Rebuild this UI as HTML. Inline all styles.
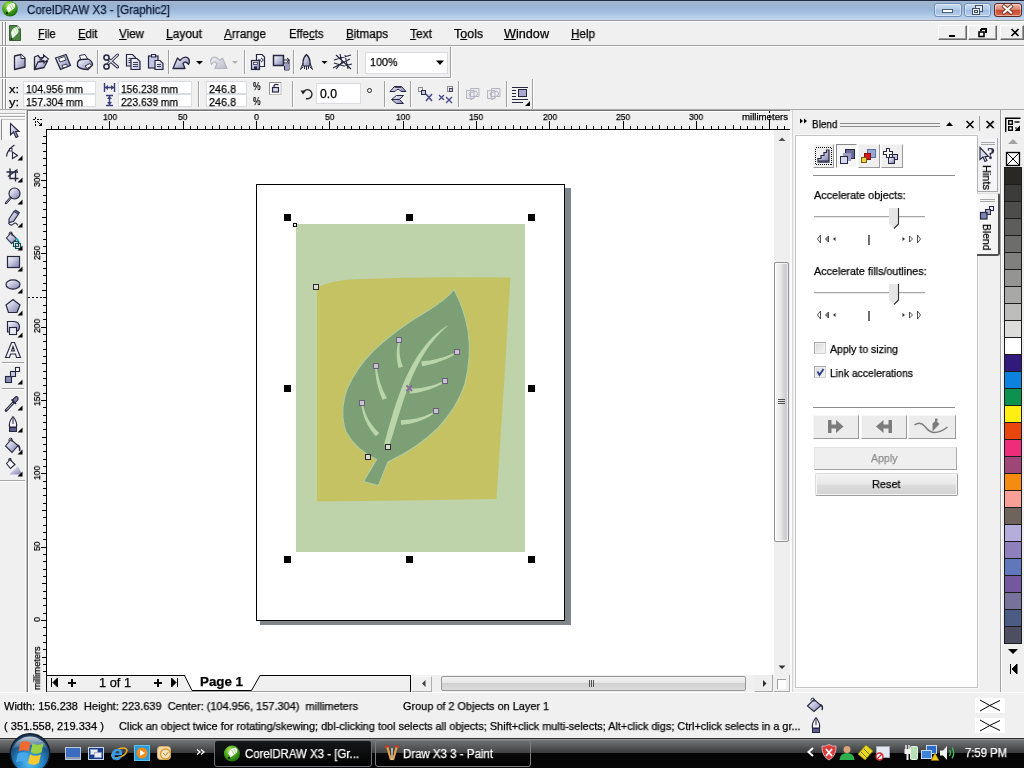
<!DOCTYPE html><html><head><meta charset="utf-8"><title>CorelDRAW X3 - [Graphic2]</title><style>
html,body{margin:0;padding:0;}
body{width:1024px;height:768px;overflow:hidden;background:#f0f0f0;font-family:"Liberation Sans",sans-serif;position:relative;}
.t{position:absolute;white-space:nowrap;transform-origin:0 50%;will-change:transform;-webkit-text-stroke:0.25px;}
.t u{text-decoration:underline;text-underline-offset:1px;}
div{box-sizing:border-box;}
svg{position:absolute;left:0;top:0;overflow:visible;}
.vsep{position:absolute;width:2px;border-left:1px solid #a0a0a0;border-right:1px solid #fff;}
.inp{position:absolute;background:#fff;border:1px solid #d9dde1;}
</style></head><body>
<div style="position:absolute;left:0px;top:0px;width:1024px;height:22px;background:linear-gradient(#1c2c48 0px,#1c2c48 1px,#a9b9cf 1px,#a9b9cf 2px,#9fb3cd 2px,#9ab6d7 9px,#b1cbe9 16px,#c6d6e9 20px,#9a9ca4 20px,#9a9ca4 21px,#fff 21px,#fff 22px);"></div>
<svg width="1024" height="21" viewBox="0 0 1024 21"><defs><radialGradient id="orb" cx="40%" cy="30%" r="70%"><stop offset="0" stop-color="#b8e86a"/><stop offset="0.5" stop-color="#4fae1e"/><stop offset="1" stop-color="#1f6a0c"/></radialGradient></defs><circle cx="10" cy="8.700" r="7.800" fill="url(#orb)"/><path d="M13.500 2.800 Q16.500 5 14.500 8 L8.500 12.500 L6.500 8.500 Q8 3.500 13.500 2.800 Z" fill="#fff" opacity=".95"/><path d="M9.500 5 L12 9.500 M11.500 3.800 L13.800 8" stroke="#8cd060" stroke-width=".8"/><circle cx="7" cy="13" r="1.100" fill="#0c200c"/></svg>
<span class="t" style="left:27px;top:3.84px;font-size:12px;line-height:12px;color:#0c1a33;transform:scaleX(0.9602);">CorelDRAW X3 - [Graphic2]</span>
<div style="position:absolute;left:934px;top:3px;width:28px;height:14px;background:linear-gradient(#c7daf0 0%,#b3cbe8 45%,#9dbbe0 50%,#b8d0ec 100%);border:1px solid #6f8fb8;border-radius:3px;box-shadow:inset 0 0 0 1px rgba(255,255,255,.45);"></div>
<div style="position:absolute;left:964px;top:3px;width:27px;height:14px;background:linear-gradient(#c7daf0 0%,#b3cbe8 45%,#9dbbe0 50%,#b8d0ec 100%);border:1px solid #6f8fb8;border-radius:3px;box-shadow:inset 0 0 0 1px rgba(255,255,255,.45);"></div>
<div style="position:absolute;left:994px;top:3px;width:28px;height:14px;background:linear-gradient(#edb8aa 0%,#dd8a76 45%,#c8482e 50%,#d66a4e 100%);border:1px solid #5a2a28;border-radius:3px;box-shadow:inset 0 0 0 1px rgba(255,255,255,.45);"></div>
<svg width="1024" height="21" viewBox="0 0 1024 21"><rect x="942.5" y="9.5" width="10" height="3" fill="#fff" stroke="#4b5b74"/><rect x="975.5" y="5.5" width="7" height="6" fill="#dfe9f5" stroke="#3f4d63"/><rect x="972.5" y="8.5" width="7" height="6" fill="#eef3fa" stroke="#3f4d63"/><rect x="974.5" y="10.5" width="3" height="2" fill="none" stroke="#3f4d63"/><path d="M1004 6.500 L1011 12.500 M1011 6.500 L1004 12.500" stroke="#7a3424" stroke-width="3.800" stroke-linecap="square"/><path d="M1004 6.500 L1011 12.500 M1011 6.500 L1004 12.500" stroke="#fff" stroke-width="2.200" stroke-linecap="square"/></svg>
<div style="position:absolute;left:0px;top:22px;width:1024px;height:24px;background:#f0f0f0;border-bottom:1px solid #a0a0a0;"></div>
<div style="position:absolute;left:0px;top:46px;width:1024px;height:1px;background:#fff;"></div>
<div style="position:absolute;left:2px;top:22px;width:2px;height:23px;border-left:1px solid #8e8e8e;border-right:1px solid #fff;"></div><div style="position:absolute;left:5px;top:22px;width:2px;height:23px;border-left:1px solid #8e8e8e;border-right:1px solid #fff;"></div>
<svg width="40" height="46" viewBox="0 0 40 46"><path d="M9.500 25.500 H17 L20.500 29 V40.500 H9.500 Z" fill="#4c8444" stroke="#3a5c3a"/><path d="M17 25.500 V29 H20.500" fill="#dfe8dc" stroke="#3a5c3a" stroke-width=".8"/><path d="M16.500 27 Q19.500 30 18 33 L12.500 38.500 L11 33 Q12 28 16.500 27 Z" fill="#f4fff0"/><path d="M13.500 29.500 L15.500 34 M15.500 28 L17.500 32.500" stroke="#a4d890" stroke-width=".8"/><circle cx="11.500" cy="39" r="1" fill="#102810"/></svg>
<span class="t" style="left:37.5px;top:27.92px;font-size:12.5px;line-height:12.5px;color:#000;transform:scaleX(0.8689);"><u>F</u>ile</span>
<span class="t" style="left:77.5px;top:27.92px;font-size:12.5px;line-height:12.5px;color:#000;transform:scaleX(0.9053);"><u>E</u>dit</span>
<span class="t" style="left:119px;top:27.92px;font-size:12.5px;line-height:12.5px;color:#000;transform:scaleX(0.9305);"><u>V</u>iew</span>
<span class="t" style="left:166px;top:27.92px;font-size:12.5px;line-height:12.5px;color:#000;transform:scaleX(0.9593);"><u>L</u>ayout</span>
<span class="t" style="left:224px;top:27.92px;font-size:12.5px;line-height:12.5px;color:#000;transform:scaleX(0.9445);"><u>A</u>rrange</span>
<span class="t" style="left:288.5px;top:27.92px;font-size:12.5px;line-height:12.5px;color:#000;transform:scaleX(0.9084);">Effe<u>c</u>ts</span>
<span class="t" style="left:346px;top:27.92px;font-size:12.5px;line-height:12.5px;color:#000;transform:scaleX(0.9302);"><u>B</u>itmaps</span>
<span class="t" style="left:410px;top:27.92px;font-size:12.5px;line-height:12.5px;color:#000;transform:scaleX(0.9597);"><u>T</u>ext</span>
<span class="t" style="left:454px;top:27.92px;font-size:12.5px;line-height:12.5px;color:#000;transform:scaleX(0.9938);">T<u>o</u>ols</span>
<span class="t" style="left:504px;top:27.92px;font-size:12.5px;line-height:12.5px;color:#000;transform:scaleX(1.0122);"><u>W</u>indow</span>
<span class="t" style="left:571px;top:27.92px;font-size:12.5px;line-height:12.5px;color:#000;transform:scaleX(0.9336);"><u>H</u>elp</span>
<div style="position:absolute;left:938px;top:25px;width:29px;height:15px;background:#f0f0f0;border-top:1px solid #fff;border-left:1px solid #fff;border-right:1px solid #696969;border-bottom:1px solid #696969;box-shadow:inset -1px -1px 0 #a0a0a0;"></div>
<div style="position:absolute;left:968px;top:25px;width:29px;height:15px;background:#f0f0f0;border-top:1px solid #fff;border-left:1px solid #fff;border-right:1px solid #696969;border-bottom:1px solid #696969;box-shadow:inset -1px -1px 0 #a0a0a0;"></div>
<div style="position:absolute;left:1000px;top:25px;width:24px;height:15px;background:#f0f0f0;border-top:1px solid #fff;border-left:1px solid #fff;border-right:1px solid #696969;border-bottom:1px solid #696969;box-shadow:inset -1px -1px 0 #a0a0a0;"></div>
<svg width="1024" height="46" viewBox="0 0 1024 46"><rect x="949" y="35" width="6" height="2" fill="#000"/><path d="M981 29 H986 V33 M981 29 V31" stroke="#000" stroke-width="2" fill="none"/><rect x="979" y="32" width="5" height="4.5" fill="#fff" stroke="#000" stroke-width="1.6"/><path d="M1011.5 29 L1018.5 36 M1018.5 29 L1011.5 36" stroke="#000" stroke-width="1.7"/></svg>
<div style="position:absolute;left:0px;top:47px;width:451px;height:31px;border-bottom:1px solid #a0a0a0;border-right:1px solid #a0a0a0;"></div>
<div style="position:absolute;left:0px;top:78px;width:452px;height:1px;background:#fff;"></div>
<div style="position:absolute;left:451px;top:47px;width:1px;height:31px;background:#fff;"></div>
<div style="position:absolute;left:2px;top:47px;width:2px;height:30px;border-left:1px solid #8e8e8e;border-right:1px solid #fff;"></div><div style="position:absolute;left:5px;top:47px;width:2px;height:30px;border-left:1px solid #8e8e8e;border-right:1px solid #fff;"></div>
<div class="vsep" style="left:97px;top:50px;height:24px"></div>
<div class="vsep" style="left:168px;top:50px;height:24px"></div>
<div class="vsep" style="left:244px;top:50px;height:24px"></div>
<div class="vsep" style="left:293px;top:50px;height:24px"></div>
<div class="vsep" style="left:357px;top:50px;height:24px"></div>
<svg width="1024" height="768" viewBox="0 0 1024 768"><defs><linearGradient id="lg" x1="0" y1="0" x2="1" y2="1"><stop offset="0" stop-color="#fbfbfe"/><stop offset="0.35" stop-color="#d4d4e8"/><stop offset="1" stop-color="#7c7cac"/></linearGradient><linearGradient id="lgd" x1="0" y1="0" x2="1" y2="1"><stop offset="0" stop-color="#f2f2f6"/><stop offset="1" stop-color="#b9b9c6"/></linearGradient></defs><path d="M14.500 56 L21 54.500 L25 58 V67 L14.500 69.500 Z" fill="url(#lg)" stroke="#26263e" stroke-width="1.3" stroke-linejoin="round"/><path d="M21 54.500 V58.500 H25" fill="#fff" stroke="#26263e" stroke-width="1"/><path d="M34.500 57 L38 55.500 L40 58 L44.500 57.500 L42.500 63 L34.500 69.500 Z" fill="url(#lg)" stroke="#26263e" stroke-width="1.3" stroke-linejoin="round"/><path d="M34.500 69.500 L38 62 L47.500 61 L44 67.500 Z" fill="url(#lg)" stroke="#26263e" stroke-width="1.3" stroke-linejoin="round"/><path d="M40 60 L43.500 57.500 V55 L48.500 59 L44 63 V60.500 Z" fill="#f0f0f8" stroke="#26263e" stroke-width="1.100"/><path d="M55.500 58 L66 54.500 L70.500 65.500 L60.500 69.500 Z" fill="url(#lg)" stroke="#26263e" stroke-width="1.3" stroke-linejoin="round"/><path d="M58.500 58.500 L64.500 56.500 L66 60 L60 62 Z" fill="#fff" stroke="#26263e" stroke-width=".9"/><path d="M62 65.500 L66.500 64 L67.500 66.500 L63 68 Z" fill="#fff" stroke="#26263e" stroke-width=".9"/><path d="M81 61 L79.500 55.500 L85 54.500 L88 59.500" fill="#fff" stroke="#26263e" stroke-width="1"/><path d="M77.500 63 Q78 59.500 82 59.500 L88 59 Q92.500 61 92.500 65 L88 69.500 Q80 69.500 77.500 66 Z" fill="url(#lg)" stroke="#26263e" stroke-width="1.3"/><path d="M85 66 L90 63.500 L91.500 66 L87 68.500 Z" fill="#fff" stroke="#26263e" stroke-width=".9"/><path d="M117.500 55 L108 64 M106 57 L117.500 67" stroke="#26263e" stroke-width="3" stroke-linecap="round"/><path d="M117.500 55 L108 64 M106 57 L117.500 67" stroke="#e4e4f2" stroke-width="1.100" stroke-linecap="round"/><circle cx="106.500" cy="57.500" r="2.600" fill="#e8e8f4" stroke="#26263e" stroke-width="1.500"/><circle cx="106.500" cy="66.500" r="2.600" fill="#e8e8f4" stroke="#26263e" stroke-width="1.500"/><defs><linearGradient id="lgp" x1="0" y1="0" x2="1" y2="1"><stop offset="0" stop-color="#ffffff"/><stop offset="1" stop-color="#b8b8dc"/></linearGradient></defs><path d="M126.5 54.5 H132.5 L135.5 57.5 V66.0 H126.5 Z" fill="url(#lgp)" stroke="#26263e" stroke-width="1.200"/><path d="M128.5 58.5 H133.5" stroke="#3c3c5c" stroke-width="1"/><path d="M128.5 60.5 H133.5" stroke="#3c3c5c" stroke-width="1"/><path d="M128.5 62.5 H133.5" stroke="#3c3c5c" stroke-width="1"/><path d="M131 58.5 H137 L140 61.5 V69.5 H131 Z" fill="url(#lgp)" stroke="#26263e" stroke-width="1.200"/><path d="M133 62.5 H138" stroke="#3c3c5c" stroke-width="1"/><path d="M133 64.5 H138" stroke="#3c3c5c" stroke-width="1"/><path d="M133 66.5 H138" stroke="#3c3c5c" stroke-width="1"/><rect x="148.500" y="56" width="9.500" height="12" fill="#c4c4e4" stroke="#26263e" stroke-width="1.200"/><rect x="151.500" y="54.500" width="4" height="2.500" fill="#e4e4f4" stroke="#26263e"/><path d="M155 60.5 H160 L163 63.5 V69.5 H155 Z" fill="url(#lgp)" stroke="#26263e" stroke-width="1.200"/><path d="M157 64.5 H161" stroke="#3c3c5c" stroke-width="1"/><path d="M157 66.5 H161" stroke="#3c3c5c" stroke-width="1"/><path d="M173 68.500 L177.500 58 L180 60.500 Q184 55.500 188 58 Q190.500 60.500 188.500 64.500 Q186 60.500 183 63.500 L185 68.500 Z" fill="url(#lg)" stroke="#26263e" stroke-width="1.3" stroke-linejoin="round"/><path d="M196 61 H203 L199.500 64.500 Z" fill="#000"/><path d="M227 68.500 L222.500 58 L220 60.500 Q216 55.500 212 58 Q209.500 60.500 211.500 64.500 Q214 60.500 217 63.500 L215 68.500 Z" fill="url(#lgd)" stroke="#b4b4c0" stroke-width="1.200" stroke-linejoin="round"/><path d="M232 61 H238 L235 64 Z" fill="#b0b0b0"/><path d="M256.500 54.500 H262 L264.500 57 V66.500 H256.500 Z" fill="#f4f4fa" stroke="#26263e" stroke-width="1.200"/><path d="M258 60 H261 M261 58 L263.500 60 L261 62" stroke="#26263e" fill="none"/><rect x="251.500" y="60.500" width="8" height="9" fill="url(#lg)" stroke="#26263e" stroke-width="1.200"/><rect x="253.500" y="62.500" width="4" height="2" fill="#fff" stroke="#26263e" stroke-width=".7"/><rect x="254" y="66.500" width="3" height="3" fill="#26263e"/><rect x="273.500" y="55.500" width="10" height="10" fill="url(#lg)" stroke="#26263e" stroke-width="1.500"/><path d="M284 60 H289 M287 58 L289.500 60 L287 62 M284 63 H289 M289 60 V70 M284.500 66 V70 H289" stroke="#26263e" fill="none"/><path d="M285 64 H289 V69.500 H285 Z" fill="#9c9cc0"/><path d="M306.500 54.500 Q310 58 310 62 V66 H303 V62 Q303 58 306.500 54.500 Z" fill="url(#lg)" stroke="#26263e" stroke-width="1.200"/><path d="M303 63 L300.500 69.500 L303 67 M310 63 L312.500 69.500 L310 67 M304.500 66 V69 M306.500 66 V70 M308.500 66 V69" stroke="#26263e" fill="none"/><path d="M321.500 61 H327.500 L324.500 64 Z" fill="#000"/><path d="M334 60 L351 55 M336 55 L351 69 M333 68 L350 59 M340 54 L342 62 L336 69 M345 55 L348 69 M334 63 L344 66 L352 64" stroke="#26263e" stroke-width="1.100" fill="none"/></svg>
<div style="position:absolute;left:365px;top:52px;width:83px;height:22px;background:#fff;border:1px solid #d9dde1;"></div>
<span class="t" style="left:370px;top:56.77px;font-size:11.5px;line-height:11.5px;color:#000;transform:scaleX(0.9350);">100%</span>
<svg width="1024" height="100" viewBox="0 0 1024 100"><path d="M436 60.500 H444 L440 65 Z" fill="#000"/></svg>
<div style="position:absolute;left:0px;top:79px;width:533px;height:30px;border-right:1px solid #a0a0a0;"></div>
<div style="position:absolute;left:533px;top:79px;width:1px;height:30px;background:#fff;"></div>
<div style="position:absolute;left:0px;top:109px;width:1024px;height:1px;background:#a8a8a8;"></div>
<div style="position:absolute;left:2px;top:79px;width:2px;height:30px;border-left:1px solid #8e8e8e;border-right:1px solid #fff;"></div><div style="position:absolute;left:5px;top:79px;width:2px;height:30px;border-left:1px solid #8e8e8e;border-right:1px solid #fff;"></div>
<span class="t" style="left:9px;top:84.19px;font-size:11px;line-height:11px;color:#000;transform:scaleX(1.1688);">x:</span>
<span class="t" style="left:9px;top:96.69px;font-size:11px;line-height:11px;color:#000;transform:scaleX(1.1688);">y:</span>
<div class="inp" style="left:23px;top:81px;width:73px;height:13px"></div><div class="inp" style="left:23px;top:94px;width:73px;height:13px"></div>
<span class="t" style="left:26px;top:84.19px;font-size:11px;line-height:11px;color:#000;transform:scaleX(0.9323);">104.956 mm</span>
<span class="t" style="left:26px;top:96.69px;font-size:11px;line-height:11px;color:#000;transform:scaleX(0.9323);">157.304 mm</span>
<div class="inp" style="left:118px;top:81px;width:74px;height:13px"></div><div class="inp" style="left:118px;top:94px;width:74px;height:13px"></div>
<span class="t" style="left:121px;top:84.19px;font-size:11px;line-height:11px;color:#000;transform:scaleX(0.9323);">156.238 mm</span>
<span class="t" style="left:121px;top:96.69px;font-size:11px;line-height:11px;color:#000;transform:scaleX(0.9323);">223.639 mm</span>
<div class="inp" style="left:206px;top:81px;width:41px;height:13px"></div><div class="inp" style="left:206px;top:94px;width:41px;height:13px"></div>
<span class="t" style="left:209px;top:84.19px;font-size:11px;line-height:11px;color:#000;transform:scaleX(0.9810);">246.8</span>
<span class="t" style="left:209px;top:96.69px;font-size:11px;line-height:11px;color:#000;transform:scaleX(0.9810);">246.8</span>
<span class="t" style="left:253px;top:81.39px;font-size:11px;line-height:11px;color:#000;transform:scaleX(0.7668);">%</span>
<span class="t" style="left:253px;top:95.69px;font-size:11px;line-height:11px;color:#000;transform:scaleX(0.7668);">%</span>
<div class="vsep" style="left:198px;top:81px;height:26px"></div>
<div class="vsep" style="left:292px;top:81px;height:26px"></div>
<div class="vsep" style="left:384px;top:81px;height:26px"></div>
<div class="vsep" style="left:410px;top:81px;height:26px"></div>
<div class="vsep" style="left:458px;top:81px;height:26px"></div>
<div class="vsep" style="left:506px;top:81px;height:26px"></div>
<div class="inp" style="left:316px;top:83px;width:45px;height:21px"></div>
<span class="t" style="left:320px;top:88.34px;font-size:12px;line-height:12px;color:#000;transform:scaleX(1.0192);">0.0</span>
<svg width="1024" height="768" viewBox="0 0 1024 768"><path d="M104.500 83 V92 M114.500 83 V92 M105 87.500 H114" stroke="#3c3c78" stroke-width="1.400"/><path d="M105 87.500 L108 85 V90 Z M114 87.500 L111 85 V90 Z" fill="#3c3c78"/><path d="M106 95.500 H113 M106 105.500 H113 M109.500 96 V105" stroke="#3c3c78" stroke-width="1.400"/><path d="M109.500 96 L107 99 H112 Z M109.500 105 L107 102 H112 Z" fill="#3c3c78"/><rect x="269.500" y="82.500" width="11.500" height="12" fill="#fff" stroke="#c0c0c0"/><path d="M269.500 94.500 V82.500 H281" fill="none" stroke="#909090"/><rect x="272.500" y="87.500" width="6" height="4.500" fill="#d8d8ec" stroke="#26263e" stroke-width="1.200"/><path d="M274 87 V85.500 Q276 83.500 278.500 85" stroke="#26263e" fill="none" stroke-width="1.200"/><path d="M303.500 92 A4.500 4.500 0 1 1 306 98.500" fill="none" stroke="#222" stroke-width="1.400"/><path d="M300.500 90.500 H306 L303 94.500 Z" fill="#222"/><circle cx="369.500" cy="90.500" r="2" fill="none" stroke="#222" stroke-width="1"/><path d="M390 91.500 L394.500 86.500 H401.500 L406 91.500 H401 L399 89.500 H397 L395 91.500 Z" fill="url(#lg)" stroke="#26263e" stroke-width="1"/><path d="M394.500 87 H401.500" stroke="#26263e" stroke-width="1.600"/><path d="M403.500 95.500 H396.500 L391.500 99.500 L396.500 103.500 H403.500 L399.500 99.500 Z" fill="url(#lg)" stroke="#26263e" stroke-width="1"/><path d="M392 99.500 H400" stroke="#26263e" stroke-width="1"/><rect x="418.500" y="87.500" width="4" height="4" fill="none" stroke="#26263e" stroke-dasharray="1 1"/><rect x="421.500" y="90.500" width="4" height="4" fill="#c8c8e0" stroke="#26263e"/><path d="M426 94 L432 101 M432 94 L426 101" stroke="#4a4a8c" stroke-width="1.600"/><path d="M439 95 L444 100 M444 95 L439 100 M446 97 L452 103 M452 97 L446 103" stroke="#4a4a8c" stroke-width="1.400"/><rect x="447.500" y="86.500" width="5" height="5" fill="none" stroke="#26263e" stroke-dasharray="1 1"/><rect x="449.500" y="88.500" width="3" height="3" fill="#c8c8e0" stroke="#26263e" stroke-width=".8"/><path d="M466.500 90.500 H474 V98.5 H466.500 Z M470.500 88.500 H479 V96.500 H470.500 Z M469 93 L476 91 L478 94 L471 100 Z" fill="#ebebef" stroke="#b6b6c2"/><path d="M487.500 90.500 H495 V98.5 H487.500 Z M491.500 88.500 H500 V96.500 H491.500 Z M490 93 L497 91 L499 94 L492 100 Z" fill="#ebebef" stroke="#b6b6c2"/><path d="M512 87.500 H528 M512 90.500 H516 M512 93.500 H516 M512 96.500 H516 M512 99.500 H528 M512 102.500 H523" stroke="#26263e" stroke-width="1"/><rect x="518.500" y="89.500" width="8" height="7" fill="#a9a9d0" stroke="#26263e"/><path d="M525 106 H530 V101 Z" fill="#000"/></svg>
<div style="position:absolute;left:0px;top:110px;width:27px;height:582px;background:#f0f0f0;"></div>
<div style="position:absolute;left:0px;top:113px;width:26px;height:1px;background:#b4b4b4;"></div>
<div style="position:absolute;left:0px;top:114px;width:26px;height:1px;background:#fff;"></div>
<div style="position:absolute;left:0px;top:116px;width:26px;height:1px;background:#a8a8a8;"></div>
<div style="position:absolute;left:0px;top:117px;width:26px;height:1px;background:#fff;"></div>
<div style="position:absolute;left:1px;top:119px;width:25px;height:21px;background:#f7f7f7;border-left:1px solid #8a8a8a;border-top:1px solid #c8c8c8;"></div>
<div style="position:absolute;left:2px;top:362px;width:22px;height:2px;border-top:1px solid #a0a0a0;border-bottom:1px solid #fff;"></div>
<div style="position:absolute;left:2px;top:388px;width:22px;height:2px;border-top:1px solid #a0a0a0;border-bottom:1px solid #fff;"></div>
<div style="position:absolute;left:0px;top:480px;width:25px;height:2px;border-top:1px solid #a8a8a8;border-bottom:1px solid #fff;"></div>
<div style="position:absolute;left:25px;top:110px;width:1px;height:582px;background:#fafafa;"></div>
<div style="position:absolute;left:26px;top:110px;width:1px;height:582px;background:#c4c4c4;"></div>
<svg width="30" height="768" viewBox="0 0 30 768"><path d="M10.500 123.500 V135 L13.500 132 L16 137.500 L18 136.500 L15.500 131.500 H19 Z" fill="url(#lg)" stroke="#26263e" stroke-width="1.100"/><path d="M6.500 156.500 Q7 150 14.500 145" fill="none" stroke="#26263e" stroke-width="1.300"/><rect x="9.500" y="148.500" width="2.500" height="2.500" fill="#fff" stroke="#26263e" stroke-width=".9"/><path d="M12.500 152 V158.500 L17.500 155.500 Z" fill="#f4f4fa" stroke="#26263e" stroke-width="1.100"/><path d="M22.500 155.5 V160.5 H17.500 Z" fill="#000"/><path d="M6.500 172 H18 M10 168.500 V178.500 H18.500 M15.500 170 V181.500 M8 176.500 L17.500 169.500" stroke="#26263e" stroke-width="1.400" fill="none"/><path d="M22.500 177.5 V182.5 H17.500 Z" fill="#000"/><circle cx="14.500" cy="193.500" r="5.500" fill="url(#lg)" stroke="#26263e" stroke-width="1.200"/><path d="M10.500 198 L6 203" stroke="#26263e" stroke-width="2.400" stroke-linecap="round"/><path d="M10.500 198 L6 203" stroke="#c8c8dc" stroke-width=".8"/><path d="M22.500 199.5 V204.5 H17.500 Z" fill="#000"/><path d="M9 219 L14 211.500 L18.500 214 L13.500 221.500 L9 222.500 Z" fill="url(#lg)" stroke="#26263e" stroke-width="1.100"/><path d="M14 211.500 L15.500 210 L19.500 212.500 L18.500 214" fill="#5c5c8c" stroke="#26263e"/><path d="M8.500 223 Q11 227 14 223.500 Q16 222 18 225.500" fill="none" stroke="#26263e" stroke-width="1.100"/><path d="M22.500 222.5 V227.5 H17.500 Z" fill="#000"/><path d="M6.500 238 L11 233 L17 239 L11.500 243.500 Z" fill="url(#lg)" stroke="#26263e" stroke-width="1.100"/><path d="M9 234.500 Q9 231 12 232.500 V236" fill="none" stroke="#26263e"/><path d="M16 238.500 Q19 240 18.500 243" stroke="#18b0b8" stroke-width="1.800" fill="none"/><rect x="13.500" y="241.500" width="5" height="5" fill="none" stroke="#0c4c54" stroke-width="1.100"/><rect x="15.500" y="243.500" width="5" height="5" fill="none" stroke="#0c4c54" stroke-width="1.100"/><path d="M22.500 245.5 V250.5 H17.500 Z" fill="#000"/><rect x="7.500" y="256.500" width="12" height="11" fill="url(#lg)" stroke="#26263e" stroke-width="1.200"/><path d="M22.500 266.5 V271.5 H17.500 Z" fill="#000"/><ellipse cx="13" cy="284.500" rx="7" ry="4.700" fill="url(#lg)" stroke="#26263e" stroke-width="1.200"/><path d="M22.500 288.5 V293.5 H17.500 Z" fill="#000"/><path d="M13 299.500 L20 305 L17 312.500 H8.500 L6 305 Z" fill="url(#lg)" stroke="#26263e" stroke-width="1.200"/><path d="M22.500 310.5 V315.5 H17.500 Z" fill="#000"/><path d="M7.500 321.500 H14 Q19.500 322 19.500 327 Q19.500 331 15 332 H7.500 Z" fill="url(#lg)" stroke="#26263e" stroke-width="1.200"/><rect x="9.500" y="327.500" width="7" height="7" fill="#ececf6" stroke="#26263e" stroke-width="1.100"/><path d="M22.500 332.5 V337.5 H17.500 Z" fill="#000"/><path d="M5.500 357.500 L11.500 342.500 H14.500 L20.500 357.500 H16.500 L15.500 354 H10.500 L9.500 357.500 Z M11.500 351 H14.500 L13 346.500 Z" fill="#f2f2fa" stroke="#26263e" stroke-width="1.100" fill-rule="evenodd"/><rect x="5.500" y="376.500" width="6" height="6" fill="#8c8cb8" stroke="#26263e" stroke-width="1.100"/><rect x="10.500" y="371.500" width="5" height="5" fill="#c8c8e0" stroke="#26263e" stroke-width="1.100"/><rect x="15.500" y="367.500" width="4" height="4" fill="#fff" stroke="#26263e" stroke-width="1.100"/><path d="M22.500 379.5 V384.5 H17.500 Z" fill="#000"/><path d="M6 410.500 L13.500 402.500" stroke="#26263e" stroke-width="2.600" stroke-linecap="round"/><path d="M6.500 410 L13 403" stroke="#d4d4e8" stroke-width=".9"/><path d="M12.500 400 L16 396.500 Q18.500 396.500 18 399.500 L15 403 Z" fill="#7c7ca8" stroke="#26263e" stroke-width="1.100"/><path d="M11.500 399.500 L16 404" stroke="#26263e" stroke-width="1.600"/><path d="M22.500 405.5 V410.5 H17.500 Z" fill="#000"/><path d="M13 416.500 Q8.500 422 9.500 427 H16.500 Q17.500 422 13 416.500 Z" fill="#f4f4fa" stroke="#26263e" stroke-width="1.100"/><path d="M13 418 V424" stroke="#26263e"/><rect x="9.500" y="427.500" width="7" height="4" fill="#5c5c8c" stroke="#26263e"/><path d="M22.500 427.5 V432.5 H17.500 Z" fill="#000"/><path d="M5.500 446 L11 439.500 L18 445.500 L12 452.500 Z" fill="url(#lg)" stroke="#26263e" stroke-width="1.100"/><path d="M9 441 Q8.500 437 12 438.500 V442" fill="none" stroke="#26263e"/><path d="M17.500 445 Q20.500 447 19.500 451" stroke="#26263e" stroke-width="1.600" fill="none"/><path d="M22.500 449.5 V454.5 H17.500 Z" fill="#000"/><path d="M6.500 463.500 L10 459.500 L15 464.500 L10.500 468.500 Z" fill="#f4f4fa" stroke="#26263e" stroke-width="1.100"/><path d="M8.500 460.500 Q8.500 457.500 11 458.500 V461" fill="none" stroke="#26263e"/><path d="M9 474.500 L18 466 L22 474.500 Z" fill="url(#lg)"/><path d="M22.500 471.5 V476.5 H17.500 Z" fill="#000"/></svg>
<div style="position:absolute;left:27px;top:110px;width:763px;height:582px;background:#f0f0f0;border-top:1px solid #767676;border-left:1px solid #767676;box-shadow:inset 1px 1px 0 #fff;"></div>
<div style="position:absolute;left:46px;top:129px;width:728px;height:563px;background:#fff;border-top:1px solid #000;border-left:1px solid #000;"></div>
<svg width="1024" height="768" viewBox="0 0 1024 768" shape-rendering="crispEdges"><rect x="51" y="126" width="1" height="3" fill="#000"/><rect x="58" y="126" width="1" height="3" fill="#000"/><rect x="65" y="126" width="1" height="3" fill="#000"/><rect x="73" y="125" width="1" height="4" fill="#000"/><rect x="80" y="126" width="1" height="3" fill="#000"/><rect x="87" y="126" width="1" height="3" fill="#000"/><rect x="95" y="126" width="1" height="3" fill="#000"/><rect x="102" y="126" width="1" height="3" fill="#000"/><rect x="109" y="121" width="1" height="8" fill="#000"/><rect x="117" y="126" width="1" height="3" fill="#000"/><rect x="124" y="126" width="1" height="3" fill="#000"/><rect x="131" y="126" width="1" height="3" fill="#000"/><rect x="139" y="126" width="1" height="3" fill="#000"/><rect x="146" y="125" width="1" height="4" fill="#000"/><rect x="153" y="126" width="1" height="3" fill="#000"/><rect x="161" y="126" width="1" height="3" fill="#000"/><rect x="168" y="126" width="1" height="3" fill="#000"/><rect x="175" y="126" width="1" height="3" fill="#000"/><rect x="183" y="121" width="1" height="8" fill="#000"/><rect x="190" y="126" width="1" height="3" fill="#000"/><rect x="197" y="126" width="1" height="3" fill="#000"/><rect x="205" y="126" width="1" height="3" fill="#000"/><rect x="212" y="126" width="1" height="3" fill="#000"/><rect x="219" y="125" width="1" height="4" fill="#000"/><rect x="227" y="126" width="1" height="3" fill="#000"/><rect x="234" y="126" width="1" height="3" fill="#000"/><rect x="241" y="126" width="1" height="3" fill="#000"/><rect x="249" y="126" width="1" height="3" fill="#000"/><rect x="256" y="121" width="1" height="8" fill="#000"/><rect x="263" y="126" width="1" height="3" fill="#000"/><rect x="271" y="126" width="1" height="3" fill="#000"/><rect x="278" y="126" width="1" height="3" fill="#000"/><rect x="285" y="126" width="1" height="3" fill="#000"/><rect x="293" y="125" width="1" height="4" fill="#000"/><rect x="300" y="126" width="1" height="3" fill="#000"/><rect x="307" y="126" width="1" height="3" fill="#000"/><rect x="315" y="126" width="1" height="3" fill="#000"/><rect x="322" y="126" width="1" height="3" fill="#000"/><rect x="329" y="121" width="1" height="8" fill="#000"/><rect x="337" y="126" width="1" height="3" fill="#000"/><rect x="344" y="126" width="1" height="3" fill="#000"/><rect x="351" y="126" width="1" height="3" fill="#000"/><rect x="359" y="126" width="1" height="3" fill="#000"/><rect x="366" y="125" width="1" height="4" fill="#000"/><rect x="373" y="126" width="1" height="3" fill="#000"/><rect x="381" y="126" width="1" height="3" fill="#000"/><rect x="388" y="126" width="1" height="3" fill="#000"/><rect x="395" y="126" width="1" height="3" fill="#000"/><rect x="403" y="121" width="1" height="8" fill="#000"/><rect x="410" y="126" width="1" height="3" fill="#000"/><rect x="417" y="126" width="1" height="3" fill="#000"/><rect x="425" y="126" width="1" height="3" fill="#000"/><rect x="432" y="126" width="1" height="3" fill="#000"/><rect x="439" y="125" width="1" height="4" fill="#000"/><rect x="447" y="126" width="1" height="3" fill="#000"/><rect x="454" y="126" width="1" height="3" fill="#000"/><rect x="461" y="126" width="1" height="3" fill="#000"/><rect x="469" y="126" width="1" height="3" fill="#000"/><rect x="476" y="121" width="1" height="8" fill="#000"/><rect x="483" y="126" width="1" height="3" fill="#000"/><rect x="491" y="126" width="1" height="3" fill="#000"/><rect x="498" y="126" width="1" height="3" fill="#000"/><rect x="505" y="126" width="1" height="3" fill="#000"/><rect x="513" y="125" width="1" height="4" fill="#000"/><rect x="520" y="126" width="1" height="3" fill="#000"/><rect x="527" y="126" width="1" height="3" fill="#000"/><rect x="535" y="126" width="1" height="3" fill="#000"/><rect x="542" y="126" width="1" height="3" fill="#000"/><rect x="549" y="121" width="1" height="8" fill="#000"/><rect x="557" y="126" width="1" height="3" fill="#000"/><rect x="564" y="126" width="1" height="3" fill="#000"/><rect x="571" y="126" width="1" height="3" fill="#000"/><rect x="579" y="126" width="1" height="3" fill="#000"/><rect x="586" y="125" width="1" height="4" fill="#000"/><rect x="593" y="126" width="1" height="3" fill="#000"/><rect x="601" y="126" width="1" height="3" fill="#000"/><rect x="608" y="126" width="1" height="3" fill="#000"/><rect x="615" y="126" width="1" height="3" fill="#000"/><rect x="623" y="121" width="1" height="8" fill="#000"/><rect x="630" y="126" width="1" height="3" fill="#000"/><rect x="637" y="126" width="1" height="3" fill="#000"/><rect x="645" y="126" width="1" height="3" fill="#000"/><rect x="652" y="126" width="1" height="3" fill="#000"/><rect x="659" y="125" width="1" height="4" fill="#000"/><rect x="667" y="126" width="1" height="3" fill="#000"/><rect x="674" y="126" width="1" height="3" fill="#000"/><rect x="681" y="126" width="1" height="3" fill="#000"/><rect x="689" y="126" width="1" height="3" fill="#000"/><rect x="696" y="121" width="1" height="8" fill="#000"/><rect x="703" y="126" width="1" height="3" fill="#000"/><rect x="711" y="126" width="1" height="3" fill="#000"/><rect x="718" y="126" width="1" height="3" fill="#000"/><rect x="725" y="126" width="1" height="3" fill="#000"/><rect x="733" y="125" width="1" height="4" fill="#000"/><rect x="740" y="126" width="1" height="3" fill="#000"/><rect x="747" y="126" width="1" height="3" fill="#000"/><rect x="755" y="126" width="1" height="3" fill="#000"/><rect x="762" y="126" width="1" height="3" fill="#000"/><rect x="769" y="121" width="1" height="8" fill="#000"/><rect x="777" y="126" width="1" height="3" fill="#000"/><rect x="784" y="126" width="1" height="3" fill="#000"/><rect x="43" y="671" width="3" height="1" fill="#000"/><rect x="43" y="664" width="3" height="1" fill="#000"/><rect x="42" y="657" width="4" height="1" fill="#000"/><rect x="43" y="649" width="3" height="1" fill="#000"/><rect x="43" y="642" width="3" height="1" fill="#000"/><rect x="43" y="635" width="3" height="1" fill="#000"/><rect x="43" y="627" width="3" height="1" fill="#000"/><rect x="41" y="620" width="5" height="1" fill="#000"/><rect x="43" y="613" width="3" height="1" fill="#000"/><rect x="43" y="605" width="3" height="1" fill="#000"/><rect x="43" y="598" width="3" height="1" fill="#000"/><rect x="43" y="591" width="3" height="1" fill="#000"/><rect x="42" y="583" width="4" height="1" fill="#000"/><rect x="43" y="576" width="3" height="1" fill="#000"/><rect x="43" y="569" width="3" height="1" fill="#000"/><rect x="43" y="561" width="3" height="1" fill="#000"/><rect x="43" y="554" width="3" height="1" fill="#000"/><rect x="41" y="547" width="5" height="1" fill="#000"/><rect x="43" y="539" width="3" height="1" fill="#000"/><rect x="43" y="532" width="3" height="1" fill="#000"/><rect x="43" y="525" width="3" height="1" fill="#000"/><rect x="43" y="517" width="3" height="1" fill="#000"/><rect x="42" y="510" width="4" height="1" fill="#000"/><rect x="43" y="503" width="3" height="1" fill="#000"/><rect x="43" y="495" width="3" height="1" fill="#000"/><rect x="43" y="488" width="3" height="1" fill="#000"/><rect x="43" y="481" width="3" height="1" fill="#000"/><rect x="41" y="473" width="5" height="1" fill="#000"/><rect x="43" y="466" width="3" height="1" fill="#000"/><rect x="43" y="459" width="3" height="1" fill="#000"/><rect x="43" y="451" width="3" height="1" fill="#000"/><rect x="43" y="444" width="3" height="1" fill="#000"/><rect x="42" y="437" width="4" height="1" fill="#000"/><rect x="43" y="429" width="3" height="1" fill="#000"/><rect x="43" y="422" width="3" height="1" fill="#000"/><rect x="43" y="415" width="3" height="1" fill="#000"/><rect x="43" y="407" width="3" height="1" fill="#000"/><rect x="41" y="400" width="5" height="1" fill="#000"/><rect x="43" y="393" width="3" height="1" fill="#000"/><rect x="43" y="385" width="3" height="1" fill="#000"/><rect x="43" y="378" width="3" height="1" fill="#000"/><rect x="43" y="371" width="3" height="1" fill="#000"/><rect x="42" y="363" width="4" height="1" fill="#000"/><rect x="43" y="356" width="3" height="1" fill="#000"/><rect x="43" y="349" width="3" height="1" fill="#000"/><rect x="43" y="341" width="3" height="1" fill="#000"/><rect x="43" y="334" width="3" height="1" fill="#000"/><rect x="41" y="327" width="5" height="1" fill="#000"/><rect x="43" y="319" width="3" height="1" fill="#000"/><rect x="43" y="312" width="3" height="1" fill="#000"/><rect x="43" y="305" width="3" height="1" fill="#000"/><rect x="43" y="297" width="3" height="1" fill="#000"/><rect x="42" y="290" width="4" height="1" fill="#000"/><rect x="43" y="283" width="3" height="1" fill="#000"/><rect x="43" y="275" width="3" height="1" fill="#000"/><rect x="43" y="268" width="3" height="1" fill="#000"/><rect x="43" y="261" width="3" height="1" fill="#000"/><rect x="41" y="253" width="5" height="1" fill="#000"/><rect x="43" y="246" width="3" height="1" fill="#000"/><rect x="43" y="239" width="3" height="1" fill="#000"/><rect x="43" y="231" width="3" height="1" fill="#000"/><rect x="43" y="224" width="3" height="1" fill="#000"/><rect x="42" y="217" width="4" height="1" fill="#000"/><rect x="43" y="209" width="3" height="1" fill="#000"/><rect x="43" y="202" width="3" height="1" fill="#000"/><rect x="43" y="195" width="3" height="1" fill="#000"/><rect x="43" y="187" width="3" height="1" fill="#000"/><rect x="41" y="180" width="5" height="1" fill="#000"/><rect x="43" y="173" width="3" height="1" fill="#000"/><rect x="43" y="165" width="3" height="1" fill="#000"/><rect x="43" y="158" width="3" height="1" fill="#000"/><rect x="43" y="151" width="3" height="1" fill="#000"/><rect x="42" y="143" width="4" height="1" fill="#000"/><rect x="43" y="136" width="3" height="1" fill="#000"/><path d="M33 119.500 H43 M35.500 117 V127" stroke="#000" stroke-dasharray="2 1.500" fill="none"/><path d="M37 121 L41 125" stroke="#000" fill="none" shape-rendering="auto"/><path d="M42 122.500 V126 H38.500 Z" fill="#000" shape-rendering="auto"/><path d="M28 297.500 H45" stroke="#000" stroke-dasharray="2 2"/><path d="M769.500 111 V128" stroke="#000" stroke-dasharray="2 2"/></svg>
<span class="t" style="left:103px;top:112.46px;font-size:9.5px;line-height:9.5px;color:#000;transform:scaleX(0.8960);">100</span>
<span class="t" style="left:178px;top:112.46px;font-size:9.5px;line-height:9.5px;color:#000;transform:scaleX(0.8991);">50</span>
<span class="t" style="left:254px;top:112.46px;font-size:9.5px;line-height:9.5px;color:#000;transform:scaleX(0.9465);">0</span>
<span class="t" style="left:325px;top:112.46px;font-size:9.5px;line-height:9.5px;color:#000;transform:scaleX(0.8991);">50</span>
<span class="t" style="left:396px;top:112.46px;font-size:9.5px;line-height:9.5px;color:#000;transform:scaleX(0.8960);">100</span>
<span class="t" style="left:469px;top:112.46px;font-size:9.5px;line-height:9.5px;color:#000;transform:scaleX(0.8960);">150</span>
<span class="t" style="left:543px;top:112.46px;font-size:9.5px;line-height:9.5px;color:#000;transform:scaleX(0.8960);">200</span>
<span class="t" style="left:616px;top:112.46px;font-size:9.5px;line-height:9.5px;color:#000;transform:scaleX(0.8960);">250</span>
<span class="t" style="left:689px;top:112.46px;font-size:9.5px;line-height:9.5px;color:#000;transform:scaleX(0.8960);">300</span>
<span class="t" style="left:742px;top:112.46px;font-size:9.5px;line-height:9.5px;color:#000;transform:scaleX(1.0135);">millimeters</span>
<span class="t" style="left:32px;top:621.8px;font-size:9.5px;line-height:10px;transform-origin:0 0;transform:rotate(-90deg) scaleX(0.946);">0</span>
<span class="t" style="left:32px;top:550.7px;font-size:9.5px;line-height:10px;transform-origin:0 0;transform:rotate(-90deg) scaleX(0.899);">50</span>
<span class="t" style="left:32px;top:479.8px;font-size:9.5px;line-height:10px;transform-origin:0 0;transform:rotate(-90deg) scaleX(0.896);">100</span>
<span class="t" style="left:32px;top:406.4px;font-size:9.5px;line-height:10px;transform-origin:0 0;transform:rotate(-90deg) scaleX(0.896);">150</span>
<span class="t" style="left:32px;top:333.1px;font-size:9.5px;line-height:10px;transform-origin:0 0;transform:rotate(-90deg) scaleX(0.896);">200</span>
<span class="t" style="left:32px;top:259.8px;font-size:9.5px;line-height:10px;transform-origin:0 0;transform:rotate(-90deg) scaleX(0.896);">250</span>
<span class="t" style="left:32px;top:186.5px;font-size:9.5px;line-height:10px;transform-origin:0 0;transform:rotate(-90deg) scaleX(0.896);">300</span>
<span class="t" style="left:32px;top:689.5px;font-size:9.5px;line-height:10px;transform-origin:0 0;transform:rotate(-90deg) scaleX(0.958);">millimeters</span>
<svg width="1024" height="768" viewBox="0 0 1024 768"><rect x="260" y="188" width="311" height="437" fill="#80868a"/><rect x="256.500" y="184.500" width="308" height="436" fill="#fff" stroke="#000" stroke-width="1"/><rect x="296" y="224" width="229" height="328" fill="#bfd3ab"/><path d="M317 287.500 Q330 281 350 279.500 Q415 276.500 510.500 277.500 Q509 300 505 370 L496.500 499 Q400 500.500 317 501.500 Z" fill="#c5c263"/><path d="M454 289.500 Q464 308 468 330 Q472 356 465 384 Q457 408 438 428 Q418 448 388 462 L378.500 485.500 L363.500 481.500 L376.500 459.500 Q356 450 346 432 Q339 412 347 389 Q356 368 374 350 Q398 328 424 313 Q446 300 454 289.500 Z" fill="#7c9f75" stroke="#b4cc98" stroke-width="1.2"/><path d="M447.2 325.4 L443.2 328.2 L439.4 331.2 L435.8 334.3 L432.4 337.6 L429.0 341.0 L426.0 344.6 L423.0 348.4 L420.2 352.2 L417.6 356.1 L415.0 360.2 L412.6 364.3 L410.4 368.5 L408.2 372.8 L406.2 377.1 L404.2 381.5 L402.4 385.9 L400.6 390.4 L399.0 394.9 L397.4 399.4 L395.8 404.0 L394.3 408.5 L392.9 413.1 L391.6 417.7 L390.2 422.2 L388.9 426.8 L387.6 431.3 L386.4 435.8 L385.2 440.2 L384.0 444.7 L389.0 446.2 L390.5 441.8 L391.9 437.4 L393.4 433.0 L394.7 428.5 L396.1 424.0 L397.4 419.4 L398.8 414.9 L400.3 410.4 L401.7 405.9 L403.1 401.4 L404.6 396.9 L406.2 392.4 L407.8 388.0 L409.5 383.6 L411.2 379.3 L413.0 375.0 L415.0 370.7 L417.0 366.6 L419.1 362.5 L421.3 358.4 L423.6 354.4 L426.1 350.6 L428.7 346.8 L431.5 343.1 L434.4 339.5 L437.4 335.9 L440.6 332.5 L444.0 329.2 L447.7 326.0 Z" fill="#b9d5a9"/><path d="M422.0 366.2 L424.8 365.7 L427.6 365.1 L430.4 364.5 L433.1 363.8 L435.9 363.0 L438.5 362.1 L441.2 361.1 L443.8 360.1 L446.4 359.0 L448.9 357.8 L451.4 356.5 L453.9 355.1 L456.4 353.7 L455.6 352.3 L453.1 353.5 L450.5 354.6 L448.0 355.6 L445.4 356.5 L442.8 357.4 L440.2 358.1 L437.6 358.8 L434.9 359.4 L432.3 359.9 L429.6 360.4 L426.9 360.7 L424.2 361.0 L421.4 361.2 Z" fill="#b9d5a9"/><path d="M409.9 393.7 L412.7 393.3 L415.6 392.9 L418.4 392.4 L421.2 391.7 L424.0 391.0 L426.7 390.2 L429.4 389.4 L432.1 388.4 L434.7 387.4 L437.3 386.3 L439.9 385.1 L442.4 383.8 L444.9 382.4 L444.3 381.0 L441.7 382.1 L439.1 383.1 L436.5 384.1 L433.8 384.9 L431.2 385.7 L428.5 386.3 L425.9 386.9 L423.2 387.4 L420.5 387.9 L417.8 388.2 L415.0 388.5 L412.3 388.6 L409.5 388.7 Z" fill="#b9d5a9"/><path d="M401.1 424.9 L404.0 424.6 L406.9 424.2 L409.8 423.7 L412.6 423.1 L415.3 422.3 L418.1 421.5 L420.7 420.5 L423.4 419.5 L426.0 418.3 L428.5 417.0 L431.0 415.6 L433.4 414.1 L435.8 412.5 L435.0 411.1 L432.5 412.5 L430.0 413.7 L427.5 414.8 L424.9 415.9 L422.3 416.8 L419.7 417.5 L417.1 418.2 L414.5 418.8 L411.8 419.2 L409.1 419.6 L406.4 419.8 L403.7 419.9 L400.9 419.9 Z" fill="#b9d5a9"/><path d="M403.0 366.7 L402.2 364.7 L401.6 362.8 L401.0 360.8 L400.5 358.8 L400.1 356.8 L399.8 354.8 L399.6 352.8 L399.5 350.8 L399.5 348.7 L399.6 346.7 L399.7 344.6 L400.0 342.5 L400.4 340.4 L398.8 340.0 L398.2 342.1 L397.7 344.3 L397.3 346.4 L397.0 348.6 L396.8 350.7 L396.7 352.9 L396.7 355.1 L396.7 357.2 L396.9 359.4 L397.2 361.6 L397.6 363.8 L398.0 366.0 L398.6 368.1 Z" fill="#b9d5a9"/><path d="M386.9 397.9 L385.6 395.6 L384.4 393.3 L383.3 390.9 L382.3 388.6 L381.4 386.2 L380.5 383.7 L379.7 381.3 L379.0 378.8 L378.4 376.3 L377.8 373.7 L377.3 371.2 L376.9 368.6 L376.6 365.9 L375.0 366.1 L375.1 368.7 L375.3 371.4 L375.6 374.1 L375.9 376.8 L376.3 379.4 L376.9 382.0 L377.4 384.6 L378.1 387.2 L378.9 389.8 L379.7 392.4 L380.6 394.9 L381.7 397.4 L382.7 399.9 Z" fill="#b9d5a9"/><path d="M379.3 433.1 L377.3 431.2 L375.5 429.3 L373.8 427.3 L372.2 425.3 L370.7 423.1 L369.3 421.0 L368.0 418.7 L366.9 416.4 L365.9 414.0 L364.9 411.5 L364.1 409.0 L363.5 406.4 L362.9 403.7 L361.3 403.9 L361.7 406.7 L362.1 409.5 L362.7 412.2 L363.5 414.8 L364.3 417.4 L365.3 420.0 L366.5 422.5 L367.7 424.9 L369.1 427.3 L370.6 429.7 L372.3 431.9 L374.1 434.2 L375.9 436.3 Z" fill="#b9d5a9"/><rect x="284" y="214" width="7" height="7" fill="#000" shape-rendering="crispEdges"/><rect x="406" y="214" width="7" height="7" fill="#000" shape-rendering="crispEdges"/><rect x="528" y="214" width="7" height="7" fill="#000" shape-rendering="crispEdges"/><rect x="284" y="385" width="7" height="7" fill="#000" shape-rendering="crispEdges"/><rect x="528" y="385" width="7" height="7" fill="#000" shape-rendering="crispEdges"/><rect x="284" y="556" width="7" height="7" fill="#000" shape-rendering="crispEdges"/><rect x="406" y="556" width="7" height="7" fill="#000" shape-rendering="crispEdges"/><rect x="528" y="556" width="7" height="7" fill="#000" shape-rendering="crispEdges"/><rect x="396.5" y="337.5" width="5" height="5" fill="#c9c4d2" stroke="#6b5f7a" stroke-width="1"/><rect x="373.5" y="363.5" width="5" height="5" fill="#c9c4d2" stroke="#6b5f7a" stroke-width="1"/><rect x="359.5" y="400.5" width="5" height="5" fill="#c9c4d2" stroke="#6b5f7a" stroke-width="1"/><rect x="454.5" y="349.5" width="5" height="5" fill="#c9c4d2" stroke="#6b5f7a" stroke-width="1"/><rect x="442.5" y="378.5" width="5" height="5" fill="#c9c4d2" stroke="#6b5f7a" stroke-width="1"/><rect x="433.5" y="408.5" width="5" height="5" fill="#c9c4d2" stroke="#6b5f7a" stroke-width="1"/><rect x="385.5" y="444.5" width="5" height="5" fill="#dcdcd4" stroke="#2a2a2a" stroke-width="1"/><rect x="365.5" y="454.5" width="5" height="5" fill="#dcdcd4" stroke="#2a2a2a" stroke-width="1"/><rect x="313.5" y="284.5" width="5" height="5" fill="#dcdcd4" stroke="#2a2a2a" stroke-width="1"/><rect x="293.500" y="223.500" width="3" height="3" fill="#fff" stroke="#000" stroke-width="1"/><path d="M406.500 385.500 L412 391 M412 385.500 L406.500 391" stroke="#8a6a9a" stroke-width="1.800"/></svg>
<div style="position:absolute;left:774px;top:130px;width:16px;height:545px;background:#efefef;"></div>
<div style="position:absolute;left:46px;top:129px;width:744px;height:1px;background:#000;"></div>
<div style="position:absolute;left:774px;top:262px;width:15px;height:280px;background:linear-gradient(90deg,#f8f8f8 0%,#ebebeb 40%,#d2d2d6 70%,#c8c8cc 100%);border:1px solid #929292;border-radius:2px;box-shadow:inset 0 0 0 1px rgba(255,255,255,.7);"></div>
<svg width="1024" height="768" viewBox="0 0 1024 768"><path d="M778.500 141 L782 137.500 L785.500 141 Z" fill="#505050"/><path d="M778.500 665.500 H785.500 L782 669 Z" fill="#303030"/><path d="M778 399.500 H785 M778 401.500 H785 M778 403.500 H785" stroke="#505050" stroke-width="1" shape-rendering="crispEdges"/></svg>
<div style="position:absolute;left:47px;top:675px;width:743px;height:17px;background:#f0f0f0;"></div>
<div style="position:absolute;left:46px;top:675px;width:365px;height:1px;background:#000;"></div>
<div style="position:absolute;left:410px;top:675px;width:1px;height:17px;background:#000;"></div>
<div style="position:absolute;left:47px;top:691px;width:363px;height:1px;background:#a0a0a0;"></div>
<svg width="1024" height="768" viewBox="0 0 1024 768"><path d="M184.500 675.500 L192 690.500 H251.500 L260 675.500" fill="#fff" stroke="#000" stroke-width="1"/><rect x="185.500" y="675" width="74" height="1" fill="#fff"/><path d="M51.500 678 V687 M57.500 678 L53 682.500 L57.500 687 Z" stroke="#000" fill="#000"/><path d="M68 683 H76 M72 679 V687" stroke="#000" stroke-width="2"/><path d="M154 683 H162 M158 679 V687" stroke="#000" stroke-width="2"/><path d="M177.500 678 V687 M171.500 678 L176 682.500 L171.500 687 Z" stroke="#000" fill="#000"/></svg>
<span class="t" style="left:98.5px;top:677.42px;font-size:12.5px;line-height:12.5px;color:#000;transform:scaleX(1.0233);">1 of 1</span>
<span class="t" style="left:199.5px;top:675.92px;font-size:12.5px;line-height:12.5px;color:#000;font-weight:bold;transform:scaleX(1.0670);">Page 1</span>
<div style="position:absolute;left:411px;top:675px;width:360px;height:17px;background:#f0f0f0;"></div>
<div style="position:absolute;left:412px;top:676px;width:20px;height:16px;background:#efefef;border-right:1px solid #b0b0b0;border-bottom:1px solid #b0b0b0;border-top:1px solid #fafafa;"></div>
<div style="position:absolute;left:441px;top:676px;width:305px;height:15px;background:linear-gradient(#f3f3f3 0%,#e6e6e6 45%,#d0d0d0 50%,#dcdcdc 100%);border:1px solid #979797;border-radius:2px;"></div>
<div style="position:absolute;left:755px;top:675px;width:18px;height:17px;background:#eeeeee;border-right:1px solid #a8a8a8;border-bottom:1px solid #a8a8a8;"></div>
<div style="position:absolute;left:774px;top:675px;width:16px;height:17px;background:#f0f0f0;border-right:1px solid #a8a8a8;border-bottom:1px solid #a8a8a8;"></div>
<div style="position:absolute;left:777px;top:679px;width:9px;height:10px;background:#fff;border-top:1px solid #a0a0a0;border-left:1px solid #a0a0a0;"></div>
<svg width="1024" height="768" viewBox="0 0 1024 768"><path d="M425.500 680 L422 683.500 L425.500 687 Z" fill="#404040"/><path d="M763 680 L766.500 683.500 L763 687 Z" fill="#303030"/><path d="M589.500 680 V687 M591.500 680 V687 M593.500 680 V687" stroke="#505050" shape-rendering="crispEdges"/></svg>
<div style="position:absolute;left:791px;top:110px;width:210px;height:583px;background:#f0f0f0;"></div>
<div style="position:absolute;left:792px;top:110px;width:1px;height:583px;background:#d4d4d4;"></div>
<div style="position:absolute;left:792px;top:692px;width:208px;height:1px;background:#a8a8a8;"></div>
<div style="position:absolute;left:790px;top:110px;width:2px;height:583px;background:#fafafa;"></div>
<div style="position:absolute;left:795px;top:135px;width:183px;height:553px;background:#fff;border:1px solid #c4c4c4;box-shadow:0 0 0 1px #f8f8f8;"></div>
<svg width="1024" height="768" viewBox="0 0 1024 768"><path d="M800 118.500 L803 121 L800 123.500 Z M804 118.500 L807 121 L804 123.500 Z" fill="#000"/><path d="M840 123.500 H940 M840 126.500 H940" stroke="#8c8c8c" stroke-width="1" shape-rendering="crispEdges"/><path d="M946 126 L949.500 122 L953 126 Z" fill="#000"/><path d="M966.500 121 L973.500 128 M973.500 121 L966.500 128" stroke="#000" stroke-width="1.500"/><path d="M979.500 116 V131" stroke="#a0a0a0"/><path d="M987.500 121.500 L994.500 128.500 M994.500 121.500 L987.500 128.500" stroke="#b0b0b0" stroke-width="1.300"/><path d="M986.500 121 L993.500 128 M993.500 121 L986.500 128" stroke="#000" stroke-width="1.500"/></svg>
<span class="t" style="left:812px;top:118.57px;font-size:11.5px;line-height:11.5px;color:#000;transform:scaleX(0.8670);">Blend</span>
<div style="position:absolute;left:813px;top:144px;width:21px;height:24px;background:#efefef;border-top:1px solid #f8f8f8;border-left:1px solid #f8f8f8;border-right:1px solid #9a9a9a;border-bottom:1px solid #9a9a9a;"></div>
<div style="position:absolute;left:836px;top:144px;width:21px;height:24px;background:#f6f6f6;border-top:1px solid #8a8a8a;border-left:1px solid #8a8a8a;border-right:1px solid #fff;border-bottom:1px solid #fff;"></div>
<div style="position:absolute;left:858px;top:144px;width:22px;height:24px;background:#efefef;border-top:1px solid #f8f8f8;border-left:1px solid #f8f8f8;border-right:1px solid #9a9a9a;border-bottom:1px solid #9a9a9a;"></div>
<div style="position:absolute;left:881px;top:144px;width:22px;height:24px;background:#efefef;border-top:1px solid #f8f8f8;border-left:1px solid #f8f8f8;border-right:1px solid #9a9a9a;border-bottom:1px solid #9a9a9a;"></div>
<div style="position:absolute;left:813px;top:175px;width:142px;height:1px;background:#8c8c8c;"></div>
<div style="position:absolute;left:813px;top:407px;width:142px;height:1px;background:#8c8c8c;"></div>
<span class="t" style="left:814px;top:189.69px;font-size:11px;line-height:11px;color:#000;transform:scaleX(0.9846);">Accelerate objects:</span>
<span class="t" style="left:814px;top:266.19px;font-size:11px;line-height:11px;color:#000;transform:scaleX(0.9788);">Accelerate fills/outlines:</span>
<div style="position:absolute;left:814px;top:342px;width:12px;height:12px;background:linear-gradient(135deg,#d6d6d6,#f8f8f8);border:1px solid #a8a8a8;border-right-color:#d0d0d0;border-bottom-color:#d0d0d0;box-shadow:inset 0 0 0 1px #f0f0f0;"></div>
<div style="position:absolute;left:814px;top:366px;width:12px;height:12px;background:linear-gradient(135deg,#d6d6d6,#f8f8f8);border:1px solid #a8a8a8;border-right-color:#d0d0d0;border-bottom-color:#d0d0d0;box-shadow:inset 0 0 0 1px #f0f0f0;"></div>
<span class="t" style="left:830px;top:344.29px;font-size:11px;line-height:11px;color:#000;transform:scaleX(0.9588);">Apply to sizing</span>
<span class="t" style="left:830px;top:368.19px;font-size:11px;line-height:11px;color:#000;transform:scaleX(0.9427);">Link accelerations</span>
<div style="position:absolute;left:813px;top:415px;width:46px;height:24px;background:#ececec;border-top:1px solid #f8f8f8;border-left:1px solid #f8f8f8;border-right:1px solid #9a9a9a;border-bottom:1px solid #9a9a9a;"></div>
<div style="position:absolute;left:861px;top:415px;width:46px;height:24px;background:#ececec;border-top:1px solid #f8f8f8;border-left:1px solid #f8f8f8;border-right:1px solid #9a9a9a;border-bottom:1px solid #9a9a9a;"></div>
<div style="position:absolute;left:908px;top:415px;width:48px;height:24px;background:#ececec;border-top:1px solid #f8f8f8;border-left:1px solid #f8f8f8;border-right:1px solid #9a9a9a;border-bottom:1px solid #9a9a9a;"></div>
<div style="position:absolute;left:814px;top:447px;width:143px;height:23px;background:#efefef;border-top:1px solid #e4e4e4;border-left:1px solid #e4e4e4;border-right:1px solid #a8a8a8;border-bottom:1px solid #a0a0a0;"></div>
<span class="t" style="left:871px;top:453.27px;font-size:11.5px;line-height:11.5px;color:#8c8c8c;transform:scaleX(0.9212);">Apply</span>
<div style="position:absolute;left:815px;top:473px;width:143px;height:23px;background:linear-gradient(#f2f2f2 0%,#eaeaea 45%,#dcdcdc 55%,#d2d2d2 100%);border-top:1px solid #dcdcdc;border-left:1px solid #dcdcdc;border-right:1px solid #9c9c9c;border-bottom:1px solid #9c9c9c;border-radius:2px;box-shadow:inset 0 0 0 1px #f6f6f6;"></div>
<span class="t" style="left:871.5px;top:478.87px;font-size:11.5px;line-height:11.5px;color:#000;transform:scaleX(0.9487);">Reset</span>
<svg width="1024" height="768" viewBox="0 0 1024 768"><rect x="815.500" y="147.500" width="16" height="17" fill="none" stroke="#000" stroke-dasharray="1 1" shape-rendering="crispEdges"/><path d="M818 161 V158.500 H821 V155.500 H824 V152.500 H826.500 V150 H829 V161 Z" fill="url(#lg)" stroke="#26263e" stroke-width="1.200"/><path d="M817.500 162 H829.500" stroke="#26263e" stroke-width="1.400"/><rect x="845.500" y="149.500" width="9" height="9" fill="#6c6c9c" stroke="#26263e"/><rect x="843" y="153" width="8" height="8" fill="#9c9cc4"/><rect x="840.500" y="156.500" width="7" height="7" fill="#d8d8f0" stroke="#26263e"/><rect x="867.500" y="149.500" width="8" height="8" fill="#98a8d0" stroke="#5c6c9c"/><rect x="864.500" y="153.500" width="6" height="6" fill="#d81818" stroke="#7c1010"/><rect x="861.500" y="157.500" width="5" height="5" fill="#f0d048" stroke="#6c5c10"/><path d="M886.500 148.500 H889.500 V151.500 H892.500 V154.500 H889.500 V157.500 H886.500 V154.500 H883.500 V151.500 H886.500 Z" fill="#fff" stroke="#26263e" stroke-width="1.300" shape-rendering="crispEdges"/><rect x="892.500" y="154.500" width="5" height="5" fill="#c8c8e0" stroke="#26263e"/><rect x="888.500" y="157.500" width="6" height="6" fill="url(#lg)" stroke="#26263e"/><rect x="814" y="216" width="111" height="1" fill="#a8a8a8"/><rect x="814" y="217" width="111" height="1" fill="#e8e8e8"/><path d="M889 208 H898.500 V224 L894 228.5 L889 224 Z" fill="#e6e6e6"/><path d="M898.500 208 V224 L894 228.5" fill="none" stroke="#303030" stroke-width="1.100"/><path d="M820.500 235 V243 L817.500 239 Z" fill="#fff" stroke="#404040" stroke-width=".9"/><path d="M828.500 236 V242 L825.500 239 Z" fill="#909090" stroke="#404040" stroke-width=".9"/><path d="M835.500 237 V241 L833 239 Z" fill="#303030"/><rect x="868" y="235" width="2" height="10" fill="#707070"/><path d="M902.500 237 V241 L905 239 Z" fill="#303030"/><path d="M909.500 236 V242 L912.500 239 Z" fill="#fff" stroke="#404040" stroke-width=".9"/><path d="M917.500 235 V243 L920.500 239 Z" fill="#fff" stroke="#404040" stroke-width=".9"/><rect x="814" y="292" width="111" height="1" fill="#a8a8a8"/><rect x="814" y="293" width="111" height="1" fill="#e8e8e8"/><path d="M889 284 H898.500 V300 L894 304.5 L889 300 Z" fill="#e6e6e6"/><path d="M898.500 284 V300 L894 304.5" fill="none" stroke="#303030" stroke-width="1.100"/><path d="M820.500 311 V319 L817.500 315 Z" fill="#fff" stroke="#404040" stroke-width=".9"/><path d="M828.500 312 V318 L825.500 315 Z" fill="#909090" stroke="#404040" stroke-width=".9"/><path d="M835.500 313 V317 L833 315 Z" fill="#303030"/><rect x="868" y="311" width="2" height="10" fill="#707070"/><path d="M902.500 313 V317 L905 315 Z" fill="#303030"/><path d="M909.500 312 V318 L912.500 315 Z" fill="#fff" stroke="#404040" stroke-width=".9"/><path d="M917.500 311 V319 L920.500 315 Z" fill="#fff" stroke="#404040" stroke-width=".9"/><path d="M817.500 371.500 L819.500 375 L823.500 369" stroke="#2c3c8c" stroke-width="1.800" fill="none"/><path d="M828 420 H831.500 V424.500 H836 V420 L843.500 426.500 L836 433 V428.500 H831.500 V433 H828 Z" fill="#7c7c7c"/><path d="M892 420 H888.500 V424.500 H883.500 V420 L876 426.500 L883.500 433 V428.500 H888.500 V433 H892 Z" fill="#7c7c7c"/><path d="M914.500 425 Q920 421 925 426.500 Q929 432 934 432.500 Q941 432.500 947.500 427" fill="none" stroke="#7c7c7c" stroke-width="1.400"/><path d="M932.500 431.500 V423.500 L936 420.500 L939.500 424 Z" fill="#7c7c7c"/><rect x="935" y="418.500" width="2.500" height="2.500" fill="#7c7c7c"/></svg>
<div style="position:absolute;left:977px;top:138px;width:21px;height:54px;background:linear-gradient(90deg,#f1f1f4,#f6f6fa);border-right:1px solid #a8a8a8;border-left:1px solid #b4b4b4;border-bottom:1px solid #a8a8a8;"></div>
<div style="position:absolute;left:977px;top:193px;width:23px;height:63px;background:linear-gradient(90deg,#fafafa,#f2f2f2);border-right:2px solid #505050;border-bottom:2px solid #505050;border-top:1px solid #e0e0e0;border-radius:0 2px 3px 0;"></div>
<svg width="1024" height="768" viewBox="0 0 1024 768"><path d="M981 142.500 H995 M981 144.500 H995 M980 199.500 H995 M980 201.500 H995" stroke="#a8a8a8" shape-rendering="crispEdges"/><path d="M980 147.500 V159.500 L983 157 L985 161.500 L987 160.500 L985 156.500 H988.500 Z" fill="#dcdcf0" stroke="#26263e" stroke-width="1.100"/><rect x="989.500" y="206.500" width="4" height="4" fill="#ececf8" stroke="#26263e"/><rect x="985.500" y="209.500" width="5" height="5" fill="#b0b0d4" stroke="#26263e"/><rect x="980.500" y="212.500" width="6.500" height="6.500" fill="#8484b4" stroke="#26263e" stroke-width="1.200"/></svg>
<span class="t" style="left:987px;top:145.500px;font-size:16px;line-height:16px;font-weight:bold;font-family:'Liberation Serif',serif;color:#2c2c48;transform:none;">?</span>
<span class="t" style="left:993px;top:165px;font-size:11.5px;line-height:12px;transform-origin:0 0;transform:rotate(90deg) scaleX(0.954);">Hints</span>
<span class="t" style="left:993px;top:223.500px;font-size:11.5px;line-height:12px;transform-origin:0 0;transform:rotate(90deg) scaleX(0.901);">Blend</span>
<div style="position:absolute;left:1000px;top:110px;width:24px;height:583px;background:#f0f0f0;border-left:1px solid #a0a0a0;"></div>
<div style="position:absolute;left:1001px;top:111px;width:1px;height:582px;background:#fff;"></div>
<div style="position:absolute;left:1004px;top:167px;width:18px;height:477px;background:#1c1c1c;"></div>
<div style="position:absolute;left:1005px;top:168px;width:16px;height:16px;background:#2a2825;"></div>
<div style="position:absolute;left:1005px;top:185px;width:16px;height:16px;background:#3c3c3a;"></div>
<div style="position:absolute;left:1005px;top:202px;width:16px;height:16px;background:#4d4d4b;"></div>
<div style="position:absolute;left:1005px;top:219px;width:16px;height:16px;background:#5d5d5b;"></div>
<div style="position:absolute;left:1005px;top:236px;width:16px;height:16px;background:#6d6d6b;"></div>
<div style="position:absolute;left:1005px;top:253px;width:16px;height:16px;background:#80807e;"></div>
<div style="position:absolute;left:1005px;top:270px;width:16px;height:16px;background:#949492;"></div>
<div style="position:absolute;left:1005px;top:287px;width:16px;height:16px;background:#a8a8a6;"></div>
<div style="position:absolute;left:1005px;top:304px;width:16px;height:16px;background:#bdbdbb;"></div>
<div style="position:absolute;left:1005px;top:321px;width:16px;height:16px;background:#dcdcda;"></div>
<div style="position:absolute;left:1005px;top:338px;width:16px;height:16px;background:#ffffff;"></div>
<div style="position:absolute;left:1005px;top:355px;width:16px;height:16px;background:#321a7c;"></div>
<div style="position:absolute;left:1005px;top:372px;width:16px;height:16px;background:#0a82de;"></div>
<div style="position:absolute;left:1005px;top:389px;width:16px;height:16px;background:#0c924e;"></div>
<div style="position:absolute;left:1005px;top:406px;width:16px;height:16px;background:#ffee12;"></div>
<div style="position:absolute;left:1005px;top:423px;width:16px;height:16px;background:#e8460e;"></div>
<div style="position:absolute;left:1005px;top:440px;width:16px;height:16px;background:#ee2c7a;"></div>
<div style="position:absolute;left:1005px;top:457px;width:16px;height:16px;background:#9e4678;"></div>
<div style="position:absolute;left:1005px;top:474px;width:16px;height:16px;background:#f48c10;"></div>
<div style="position:absolute;left:1005px;top:491px;width:16px;height:16px;background:#f8a098;"></div>
<div style="position:absolute;left:1005px;top:508px;width:16px;height:16px;background:#6e645c;"></div>
<div style="position:absolute;left:1005px;top:525px;width:16px;height:16px;background:#b5aedc;"></div>
<div style="position:absolute;left:1005px;top:542px;width:16px;height:16px;background:#8d80bc;"></div>
<div style="position:absolute;left:1005px;top:559px;width:16px;height:16px;background:#5f78bc;"></div>
<div style="position:absolute;left:1005px;top:576px;width:16px;height:16px;background:#74589f;"></div>
<div style="position:absolute;left:1005px;top:593px;width:16px;height:16px;background:#77729a;"></div>
<div style="position:absolute;left:1005px;top:610px;width:16px;height:16px;background:#4c5b83;"></div>
<div style="position:absolute;left:1005px;top:627px;width:16px;height:16px;background:#4e4e62;"></div>
<svg width="1024" height="768" viewBox="0 0 1024 768"><path d="M1005.700 132 V118.200 H1020.500" fill="none" stroke="#000" stroke-width="1.400"/><rect x="1008.700" y="120.700" width="3.600" height="3.600" fill="#fff" stroke="#000" stroke-width="1.400"/><rect x="1008.700" y="126.700" width="3.600" height="3.600" fill="#fff" stroke="#000" stroke-width="1.400"/><path d="M1014.500 122 H1019.500" stroke="#000" stroke-width="1.400"/><path d="M1015 128 H1017" stroke="#000" stroke-width="1.200"/><path d="M1020 125.500 V131 H1014.500 Z" fill="#000"/><path d="M1008 144 L1013 139 L1018 144 Z" fill="#a4a4a4"/><rect x="1006.500" y="152.500" width="13" height="13" fill="#fff" stroke="#000" stroke-width="1.300"/><path d="M1007 153 L1019 165 M1019 153 L1007 165" stroke="#000" stroke-width="1"/><path d="M1008 649 H1018 L1013 654 Z" fill="#000"/><path d="M1010.500 664 V674 M1017 664 L1012 669 L1017 674 Z" stroke="#000" fill="#000"/></svg>
<div style="position:absolute;left:0px;top:692px;width:1024px;height:46px;background:#f0f0f0;border-top:1px solid #fff;"></div>
<span class="t" style="left:4px;top:701.29px;font-size:11px;line-height:11px;color:#000;transform:scaleX(0.9982);white-space:pre;">Width: 156.238  Height: 223.639  Center: (104.956, 157.304)  millimeters</span>
<span class="t" style="left:403px;top:701.29px;font-size:11px;line-height:11px;color:#000;transform:scaleX(0.9908);">Group of 2 Objects on Layer 1</span>
<span class="t" style="left:4px;top:721.29px;font-size:11px;line-height:11px;color:#000;transform:scaleX(1.0094);">( 351.558, 219.334 )</span>
<span class="t" style="left:118.5px;top:721.29px;font-size:11px;line-height:11px;color:#000;transform:scaleX(0.9896);">Click an object twice for rotating/skewing; dbl-clicking tool selects all objects; Shift+click multi-selects; Alt+click digs; Ctrl+click selects in a gr...</span>
<div style="position:absolute;left:975px;top:698px;width:30px;height:15px;background:#fff;"></div>
<div style="position:absolute;left:975px;top:718px;width:30px;height:15px;background:#fff;"></div>
<svg width="1024" height="768" viewBox="0 0 1024 768"><path d="M980 700 Q990 706 1000 710.500 M980 711 Q990 705 1000 700.500" stroke="#000" stroke-width="1" fill="none"/><path d="M980 720 Q990 726 1000 730.500 M980 731 Q990 725 1000 720.500" stroke="#000" stroke-width="1" fill="none"/><path d="M807.500 706 L814 699.500 L821 705.500 L814 711.500 Z" fill="url(#lg)" stroke="#26263e" stroke-width="1.100"/><path d="M811 700.500 Q811 697 814 698.500 V702" fill="none" stroke="#26263e"/><path d="M820 704.500 Q823.500 706 822 710" stroke="#26263e" stroke-width="1.500" fill="none"/><path d="M816 717.500 Q811.500 723 812.500 728 H819.500 Q820.500 723 816 717.500 Z" fill="#f4f4fa" stroke="#26263e" stroke-width="1.100"/><path d="M816 719 V725" stroke="#26263e"/><rect x="812.500" y="728.500" width="7" height="4" fill="#5c5c8c" stroke="#26263e"/></svg>
<div style="position:absolute;left:0px;top:738px;width:1024px;height:30px;background:linear-gradient(#2c2c2c 0px,#2c2c2c 1px,#8e9092 1px,#8e9092 2px,#737577 2px,#37393b 15px,#030303 15px,#070707 30px);"></div>
<div style="position:absolute;left:214px;top:740px;width:158px;height:27px;background:linear-gradient(#17181a,#000);border:1px solid #6c7074;border-radius:3px;"></div>
<div style="position:absolute;left:375px;top:740px;width:156px;height:27px;background:linear-gradient(#6c6e70 0%,#424446 46%,#0a0a0a 50%,#000 100%);border:1px solid #7c7e80;border-radius:3px;"></div>
<svg width="1024" height="768" viewBox="0 0 1024 768"><defs><radialGradient id="sorb" cx="50%" cy="75%" r="75%"><stop offset="0" stop-color="#58c4f4"/><stop offset="0.45" stop-color="#2482c4"/><stop offset="0.8" stop-color="#1c4c78"/><stop offset="1" stop-color="#223c58"/></radialGradient><linearGradient id="sorbh" x1="0" y1="0" x2="0" y2="1"><stop offset="0" stop-color="#fff" stop-opacity=".75"/><stop offset="1" stop-color="#fff" stop-opacity=".05"/></linearGradient></defs><circle cx="30" cy="753.500" r="20.500" fill="#0e1c2a"/><circle cx="30" cy="753.500" r="19" fill="url(#sorb)"/><path d="M12.500 749 A18.500 18.500 0 0 1 47.500 749 Q30 741 12.500 749 Z" fill="url(#sorbh)"/><g transform="translate(30 753.500) scale(1.280) translate(-27.500 -753)"><path d="M20 744.500 Q24 742.500 28 744.500 L26.500 751.500 Q22.500 749.500 18.500 751.500 Z" fill="#ee6a30"/><path d="M29.500 745 Q33.500 747.500 38 745 L36.500 752 Q32.500 754.500 28 752 Z" fill="#9cd044"/><path d="M18 753 Q22 751 26 753 L24.500 760 Q20.500 758 16.500 760 Z" fill="#48a8ea"/><path d="M27.500 753.500 Q31.500 756 36 753.500 L34.500 760.500 Q30.500 763 26 760.500 Z" fill="#f8c830"/></g><rect x="65.500" y="747.500" width="15" height="12" fill="#3c6cc0" stroke="#b8c8e0"/><rect x="66" y="757" width="14" height="2" fill="#8c9cb0"/><rect x="88.500" y="747.500" width="15" height="12" fill="#1c3c8c" stroke="#c8d4e8"/><rect x="90.500" y="749.500" width="7" height="5" fill="#e8ecf4" stroke="#8c9cc0" stroke-width=".6"/><rect x="94.500" y="752.500" width="7" height="5" fill="#e8ecf4" stroke="#8c9cc0" stroke-width=".6"/><ellipse cx="119.500" cy="753" rx="8" ry="4" fill="none" stroke="#e8b020" stroke-width="1.600" transform="rotate(-25 119.500 753)"/><rect x="134.500" y="745.500" width="15" height="15" fill="#2c9cd8" stroke="#5cc0ec"/><circle cx="142" cy="753" r="5.500" fill="#f08c1c"/><path d="M140 750 L145 753 L140 756 Z" fill="#fff"/><rect x="157.500" y="746.500" width="13" height="13" rx="3" fill="#f0d8a8" stroke="#d8b070"/><circle cx="165.500" cy="754" r="5" fill="#f4e4c0" stroke="#d89c30" stroke-width="1.300"/><path d="M163 753 L165.500 755.500 L168.500 752" stroke="#c88420" fill="none"/><path d="M197 749.500 L200 752 L197 754.500 M201 749.500 L204 752 L201 754.500" stroke="#fff" stroke-width="1.300" fill="none"/><g transform="translate(221.700 744.600) scale(1.030)"><circle cx="10" cy="8.700" r="7.800" fill="url(#orb)"/><path d="M13.500 2.800 Q16.500 5 14.500 8 L8.500 12.500 L6.500 8.500 Q8 3.500 13.500 2.800 Z" fill="#fff" opacity=".95"/><path d="M9.500 5 L12 9.500 M11.500 3.800 L13.800 8" stroke="#8cd060" stroke-width=".8"/><circle cx="7" cy="13" r="1.100" fill="#0c200c"/></g><path d="M387 746 L391 760 M397 746 L393 760" stroke="#e8a040" stroke-width="2.200"/><path d="M392 748 V760" stroke="#c8c8c8" stroke-width="1.600"/><path d="M385 747 L389 746 M395 746 L399 747" stroke="#c83c1c" stroke-width="2"/><path d="M813 748 L808.500 752 L813 756" stroke="#fff" stroke-width="2" fill="none"/><path d="M829 744.500 Q833 747 836 746 Q836.500 756 829 760 Q821.500 756 822 746 Q825 747 829 744.500 Z" fill="#d83c3c" stroke="#f4c8c8" stroke-width=".8"/><path d="M826 749 L832 756 M832 749 L826 756" stroke="#fff" stroke-width="1.800"/><circle cx="847" cy="749.500" r="3.500" fill="#d8a47c"/><path d="M839.500 760 Q840 753 847 753 Q854 753 854.500 760 Z" fill="#2cb04c"/><path d="M858 754 L866 745 L873 751 L865 760 Z" fill="#e8d81c" stroke="#8c841c" stroke-width=".8"/><path d="M861 752 L867 758 M864 749 L870 755" stroke="#5c5410" stroke-width=".8"/><rect x="876.500" y="746.500" width="13" height="11" fill="#e4e8f0" stroke="#a0a8b8"/><circle cx="879.500" cy="756.500" r="3.500" fill="#fff" stroke="#d82c2c" stroke-width="1.400"/><path d="M877 759 L882 754" stroke="#d82c2c" stroke-width="1.300"/><rect x="910.500" y="746.500" width="7" height="13" rx="1" fill="#b8e0b8" stroke="#e8f0e8"/><path d="M906 745 V749 M909 745 V749" stroke="#fff" stroke-width="1.300"/><rect x="904.500" y="749" width="6" height="5" fill="#f4f4f4"/><path d="M907.500 754 V760" stroke="#f4f4f4" stroke-width="2"/><rect x="926.500" y="745.500" width="10" height="8" fill="#2c6cc8" stroke="#c8d8f0"/><rect x="921.500" y="750.500" width="10" height="8" fill="#3c84d8" stroke="#c8d8f0"/><path d="M931 760.500 L935 753 L939 760.500 Z" fill="#f4c81c" stroke="#8c6c10" stroke-width=".6"/><path d="M940 750.500 H943 L947 746 V760 L943 755.500 H940 Z" fill="#f0f0f0"/><path d="M949.500 750 Q951.500 753 949.500 756 M952 747.500 Q955.500 753 952 758.500" stroke="#3cc45c" stroke-width="1.300" fill="none"/></svg>
<span class="t" style="left:111px;top:742px;font-size:21px;line-height:21px;font-weight:bold;font-style:italic;color:#3c9ce8;">e</span>
<span class="t" style="left:244.5px;top:748.14px;font-size:12px;line-height:12px;color:#fff;transform:scaleX(0.9534);">CorelDRAW X3 - [Gr...</span>
<span class="t" style="left:403px;top:748.14px;font-size:12px;line-height:12px;color:#fff;transform:scaleX(0.9571);">Draw X3 3 - Paint</span>
<span class="t" style="left:965px;top:747.14px;font-size:12px;line-height:12px;color:#fff;transform:scaleX(0.9399);">7:59 PM</span>
</body></html>
